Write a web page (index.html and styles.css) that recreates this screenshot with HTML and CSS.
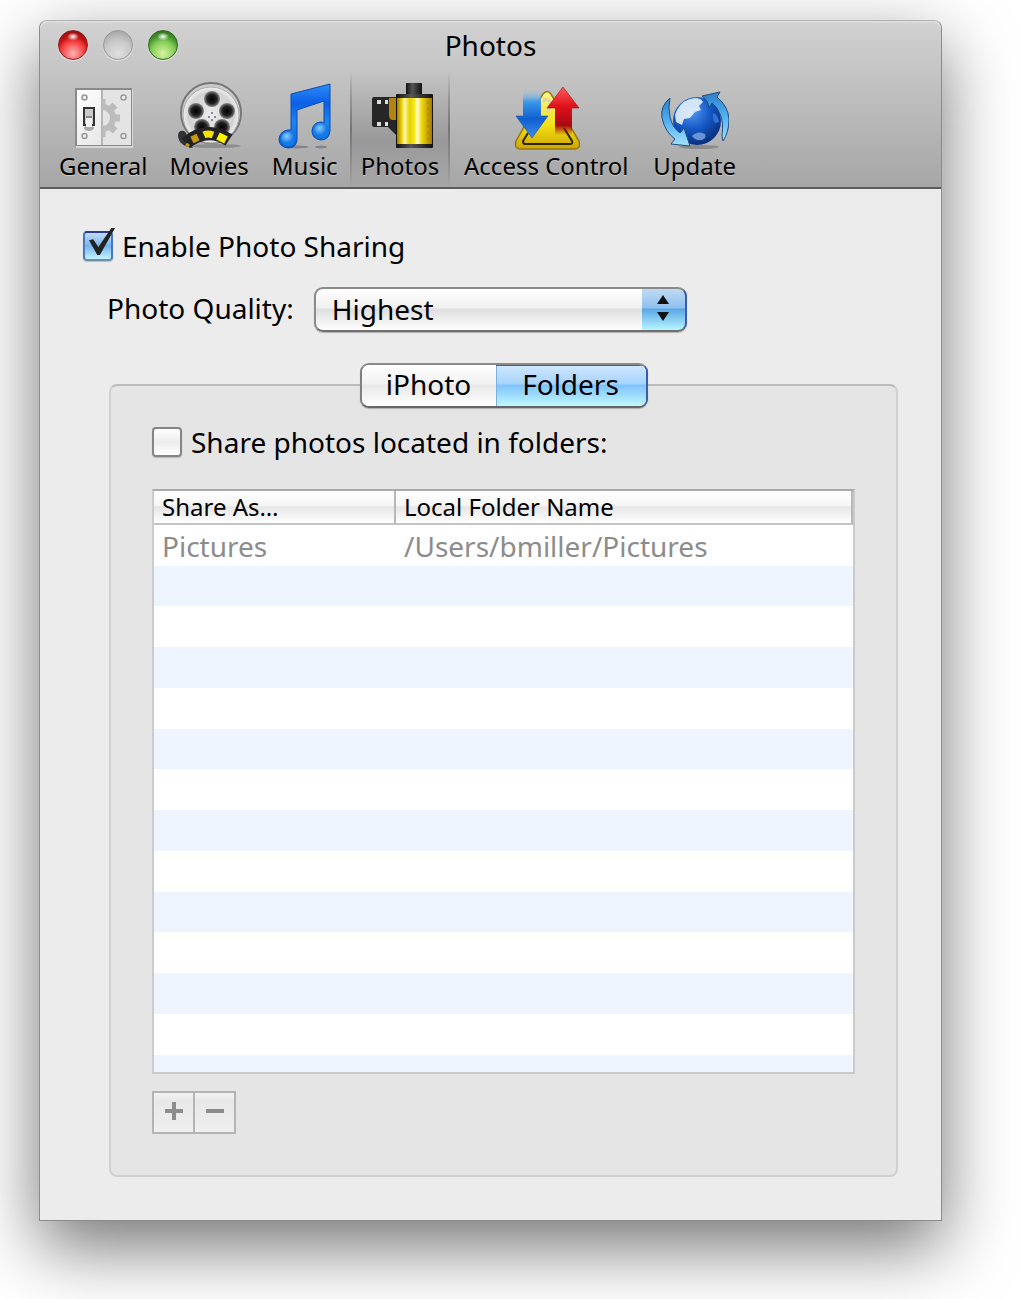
FILE: index.html
```html
<!DOCTYPE html>
<html lang="en">
<head>
    <meta charset="UTF-8">
    <meta name="viewport" content="width=device-width, initial-scale=1.0">
    <title>Photos</title>
    <link rel="stylesheet" href="styles.css">
</head>
<body>
    <main class="window">
        <header class="window-header">
            <div class="titlebar">
                <div class="lights">
                    <button type="button" class="light light-close" aria-label="Close"></button>
                    <button type="button" class="light light-minimize" aria-label="Minimize" disabled></button>
                    <button type="button" class="light light-zoom" aria-label="Zoom"></button>
                </div>
                <h1 class="title">Photos</h1>
            </div>

            <nav class="toolbar">
                <button type="button" class="tool">
                    <svg class="tool-icon" viewBox="0 0 68 68" aria-hidden="true">
                        <defs>
                            <linearGradient id="plate" x1="0" y1="0" x2="1" y2="1">
                                <stop offset="0" stop-color="#fff"/>
                                <stop offset="1" stop-color="#dedede"/>
                            </linearGradient>
                            <clipPath id="gear-half"><rect x="33" y="10" width="30" height="52"/></clipPath>
                        </defs>
                        <rect x="7" y="7" width="57" height="59" fill="#d8d8d8"/>
                        <rect x="6" y="6" width="57" height="58" fill="#8a8a8a"/>
                        <rect x="8" y="8" width="54" height="55" fill="url(#plate)"/>
                        <rect x="33" y="8" width="29" height="55" fill="#e4e4e4"/>
                        <path d="M33 8v55" stroke="#b5b5b5" stroke-width="2"/>
                        <g clip-path="url(#gear-half)" stroke="#bcbcbc" fill="none">
                            <circle cx="33" cy="36" r="11" stroke-width="6"/>
                            <path d="M33 17v6M33 49v6M46 36h5M42 27l4-4M42 45l4 4" stroke-width="7"/>
                        </g>
                        <g fill="#eee" stroke="#999" stroke-width="1.5">
                            <circle cx="15.5" cy="15.5" r="2.5"/>
                            <circle cx="54.5" cy="15.5" r="2.5"/>
                            <circle cx="15.5" cy="54" r="2.5"/>
                            <circle cx="54.5" cy="54" r="2.5"/>
                        </g>
                        <ellipse cx="20" cy="46" rx="5" ry="3" fill="#aaa"/>
                        <rect x="15" y="26" width="10" height="17" fill="#ccc" stroke="#333" stroke-width="2"/>
                        <rect x="17" y="36" width="6" height="9" fill="#f4f4f4"/>
                        <path d="M17 35h6" stroke="#888" stroke-width="2"/>
                    </svg>
                    <span>General</span>
                </button>
                <button type="button" class="tool">
                    <svg class="tool-icon" viewBox="0 0 68 68" aria-hidden="true">
                        <defs>
                            <radialGradient id="reel">
                                <stop offset="0" stop-color="#ededed"/>
                                <stop offset=".8" stop-color="#d2d2d2"/>
                                <stop offset="1" stop-color="#efefef"/>
                            </radialGradient>
                            <radialGradient id="hole">
                                <stop offset="0" stop-color="#000"/>
                                <stop offset=".6" stop-color="#222"/>
                                <stop offset="1" stop-color="#888"/>
                            </radialGradient>
                        </defs>
                        <ellipse cx="40" cy="64" rx="26" ry="2" fill="#777" opacity=".6"/>
                        <circle cx="36" cy="31" r="30" fill="#ccc" stroke="#777" stroke-width="2"/>
                        <circle cx="36" cy="33" r="28" fill="url(#reel)" stroke="#aaa"/>
                        <g fill="url(#hole)">
                            <circle cx="37" cy="17" r="8"/>
                            <circle cx="21" cy="29" r="8"/>
                            <circle cx="52" cy="29" r="8"/>
                            <circle cx="27" cy="45" r="8"/>
                            <circle cx="47" cy="45" r="8"/>
                        </g>
                        <g fill="#668">
                            <circle cx="37" cy="31" r="1"/>
                            <circle cx="34" cy="35" r="1"/>
                            <circle cx="40" cy="35" r="1"/>
                            <circle cx="37" cy="38" r="1"/>
                        </g>
                        <path d="M3 54q0-6 6-5q4 2 2 8l7 9q-14-2-15-12z" fill="#333"/>
                        <path d="M11 61Q32 44 54 58" fill="none" stroke="#222" stroke-width="13"/>
                        <path d="M17 58l6-3" fill="none" stroke="#c79a12" stroke-width="7"/>
                        <path d="M29 53q4-2 9 0" fill="none" stroke="#f2e400" stroke-width="7"/>
                        <path d="M43 54l8 4" fill="none" stroke="#fff200" stroke-width="8"/>
                        <path d="M11 62l3 2" stroke="#c79a12" stroke-width="3"/>
                    </svg>
                    <span>Movies</span>
                </button>
                <button type="button" class="tool">
                    <svg class="tool-icon" viewBox="0 0 68 68" aria-hidden="true">
                        <defs>
                            <linearGradient id="note" x1="0" y1="0" x2="0" y2="1">
                                <stop offset="0" stop-color="#2f8cf6"/>
                                <stop offset=".3" stop-color="#0b5fe8"/>
                                <stop offset=".6" stop-color="#1c86ee"/>
                                <stop offset="1" stop-color="#0b5cd0"/>
                            </linearGradient>
                            <radialGradient id="head" cx=".4" cy=".3">
                                <stop offset="0" stop-color="#8ccbff"/>
                                <stop offset="1" stop-color="#127ae6"/>
                            </radialGradient>
                        </defs>
                        <ellipse cx="26" cy="65" rx="12" ry="1.5" fill="#667" opacity=".6"/>
                        <ellipse cx="50" cy="65" rx="6" ry="1.5" fill="#667" opacity=".6"/>
                        <path d="M20 12L59 2v47q-1 9-9 9-9-1-9-9 1-9 9-9 2 0 3 1V19L26 28v30q-1 8-9 8-9-1-9-9 1-8 9-9h3z" fill="url(#note)" stroke="#0a4db4"/>
                        <circle cx="17" cy="57" r="7" fill="url(#head)"/>
                        <circle cx="50" cy="49" r="7" fill="url(#head)"/>
                    </svg>
                    <span>Music</span>
                </button>
                <button type="button" class="tool tool-active" aria-current="page">
                    <svg class="tool-icon" viewBox="0 0 68 68" aria-hidden="true">
                        <defs>
                            <linearGradient id="can">
                                <stop offset="0" stop-color="#a57b00"/>
                                <stop offset=".12" stop-color="#e8c800"/>
                                <stop offset=".22" stop-color="#fff9a0"/>
                                <stop offset=".36" stop-color="#e6cf00"/>
                                <stop offset=".5" stop-color="#f5ea20"/>
                                <stop offset=".58" stop-color="#fffde0"/>
                                <stop offset=".7" stop-color="#f0dc10"/>
                                <stop offset="1" stop-color="#a67800"/>
                            </linearGradient>
                            <linearGradient id="cap">
                                <stop offset="0" stop-color="#111"/>
                                <stop offset=".4" stop-color="#555"/>
                                <stop offset="1" stop-color="#111"/>
                            </linearGradient>
                        </defs>
                        <path d="M8 15h22v38l-8-8H8q-2 0-2-2V17q0-2 2-2z" fill="#262626"/>
                        <path d="M23 16h8v22h-5q-3-1-3-5z" fill="#b38410"/>
                        <g fill="#ddd">
                            <rect x="11" y="18" width="4" height="4"/>
                            <rect x="19" y="18" width="3" height="4"/>
                            <rect x="11" y="40" width="4" height="4"/>
                            <rect x="19" y="40" width="3" height="4"/>
                        </g>
                        <rect x="40" y="1" width="16" height="12" rx="1" fill="url(#cap)"/>
                        <rect x="30" y="12" width="37" height="54" rx="1" fill="url(#cap)"/>
                        <rect x="31" y="16" width="35" height="46" fill="url(#can)"/>
                        <path d="M62 19v40" stroke="#a87d00" stroke-width="1" stroke-dasharray="3 3"/>
                    </svg>
                    <span>Photos</span>
                </button>
                <button type="button" class="tool tool-wide">
                    <svg class="tool-icon" viewBox="0 0 68 68" aria-hidden="true">
                        <defs>
                            <linearGradient id="sign" x1="0" y1="0" x2="0" y2="1">
                                <stop offset="0" stop-color="#fff68a"/>
                                <stop offset=".6" stop-color="#f2df14"/>
                                <stop offset="1" stop-color="#cda400"/>
                            </linearGradient>
                            <linearGradient id="down" x1="0" y1="0" x2="0" y2="1">
                                <stop offset="0" stop-color="#8ec6f5" stop-opacity="0"/>
                                <stop offset=".25" stop-color="#3a97e8"/>
                                <stop offset=".6" stop-color="#0f5fd0"/>
                                <stop offset="1" stop-color="#3c8cec"/>
                            </linearGradient>
                            <linearGradient id="up" x1="0" y1="0" x2="0" y2="1">
                                <stop offset="0" stop-color="#ff5a5a"/>
                                <stop offset=".4" stop-color="#e0121c"/>
                                <stop offset=".8" stop-color="#a80812"/>
                                <stop offset="1" stop-color="#900" stop-opacity="0"/>
                            </linearGradient>
                        </defs>
                        <path d="M31 12q4-5 8 0l28 47q2 8-4 8H8q-6 0-4-8z" fill="url(#sign)" stroke="#96780a" stroke-width="1.5"/>
                        <path d="M16 51l-5 8q0 3 2 3h45q3 0 2-3l-8-13" fill="none" stroke="#2c2600" stroke-width="2"/>
                        <path d="M31 20q3-5 7 0v6l-4 4" fill="none" stroke="#ddd6a0" stroke-width="3"/>
                        <path d="M11 8h18v26h7L20 56 4 34h7z" fill="url(#down)"/>
                        <path d="M11 34H4l16 22 16-22h-7" fill="none" stroke="#1c55a8" stroke-opacity=".6"/>
                        <path d="M51 5l16 21h-7v27H43V26h-8z" fill="url(#up)"/>
                        <path d="M43 26h-8L51 5l16 21h-7" fill="none" stroke="#9c0d14" stroke-opacity=".6"/>
                    </svg>
                    <span>Access Control</span>
                </button>
                <button type="button" class="tool">
                    <svg class="tool-icon" viewBox="0 0 68 68" aria-hidden="true">
                        <defs>
                            <radialGradient id="globe" cx=".4" cy=".3" r=".75">
                                <stop offset="0" stop-color="#4f9af0"/>
                                <stop offset=".5" stop-color="#1458c4"/>
                                <stop offset="1" stop-color="#062a74"/>
                            </radialGradient>
                            <linearGradient id="swoosh" x1="0" y1="0" x2="0" y2="1">
                                <stop offset="0" stop-color="#2a7fc9"/>
                                <stop offset=".5" stop-color="#55b0f2"/>
                                <stop offset="1" stop-color="#a5e2ff"/>
                            </linearGradient>
                        </defs>
                        <ellipse cx="38" cy="65" rx="20" ry="2" fill="#666" opacity=".5"/>
                        <circle cx="36" cy="39" r="24" fill="url(#globe)"/>
                        <path d="M16 28q6-11 18-12 6 0 8 4l-4 4 2 4-6 2-5 6-6 1-2 6-6-3-1-7z" fill="#e6f1fb" opacity=".9"/>
                        <path d="M31 54q6-6 13-2 2 4-3 6-7 1-10-4z" fill="#8fb6ea" opacity=".7"/>
                        <path d="M52 31q5 2 6 9l-4 1q-3-5-2-10z" fill="#2f74d4"/>
                        <path d="M9 16Q-1 24 1 36 4 50 14 57l-4 5 19 2-6-18-4 5Q11 45 9 35 7 25 9 16z" fill="url(#swoosh)" stroke="#1b4d7c"/>
                        <path d="M41 14l18-4-3 5q11 9 12 22 0 13-6 22-1-3-1-6 2-13-2-21-3-8-8-11l-3 5q-1-8-7-12z" fill="url(#swoosh)" stroke="#1b4d7c"/>
                    </svg>
                    <span>Update</span>
                </button>
            </nav>
        </header>

        <form class="content">
            <div class="check-row">
                <input type="checkbox" class="check" id="enable-sharing" checked>
                <label for="enable-sharing">Enable Photo Sharing</label>
            </div>

            <div class="quality-row">
                <label class="quality-label" for="quality">Photo Quality:</label>
                <div class="popup">
                    <select class="popup-select" id="quality">
                        <option>Highest</option>
                        <option>Medium</option>
                        <option>Lowest</option>
                    </select>
                    <svg class="popup-arrows" viewBox="0 0 12 28" aria-hidden="true">
                        <path d="M6 1l6 9H0zM6 27l6-9H0z" fill="#111"/>
                    </svg>
                </div>
            </div>

            <section class="group">
                <div class="tabs" role="tablist">
                    <button type="button" class="tab" role="tab" aria-selected="false">iPhoto</button>
                    <button type="button" class="tab tab-active" role="tab" aria-selected="true">Folders</button>
                </div>

                <div class="check-row">
                    <input type="checkbox" class="check" id="share-folders">
                    <label for="share-folders">Share photos located in folders:</label>
                </div>

                <div class="folder-list">
                    <table class="folders">
                        <thead>
                            <tr>
                                <th class="col-share" scope="col">Share As…</th>
                                <th scope="col">Local Folder Name</th>
                            </tr>
                        </thead>
                        <tbody>
                            <tr>
                                <td>Pictures</td>
                                <td>/Users/bmiller/Pictures</td>
                            </tr>
                        </tbody>
                    </table>
                </div>

                <div class="list-buttons">
                    <button type="button" class="list-button" aria-label="Add folder">
                        <svg viewBox="0 0 18 18" aria-hidden="true"><path d="M0 9h18M9 0v18" stroke="#8c8c8c" stroke-width="4"/></svg>
                    </button>
                    <button type="button" class="list-button" aria-label="Remove folder">
                        <svg viewBox="0 0 18 18" aria-hidden="true"><path d="M0 9h18" stroke="#8c8c8c" stroke-width="4"/></svg>
                    </button>
                </div>
            </section>
        </form>
    </main>
</body>
</html>
```
FILE: styles.css
```css
* {
    box-sizing: border-box;
}

body {
    margin: 0;
    padding: 20px 78px 78px 39px;
    background-color: #fff;
    color: #000;
    font-family: "Noto Sans", "Open Sans", sans-serif;
    font-size: 28px;
    line-height: 36px;
}

button, select {
    font: inherit;
    color: inherit;
    margin: 0;
}

.window {
    border: 1px solid #8c8c8c;
    border-top-color: #b4b4b4;
    border-radius: 8px 8px 0 0;
    background-color: #ececec;
    box-shadow: 0 26px 70px rgba(0, 0, 0, 0.55);
}

/* Title bar and toolbar */
.window-header {
    border-bottom: 2px solid #5c5c5c;
    border-radius: 8px 8px 0 0;
    background: linear-gradient(#d2d2d2, #a6a6a6);
    box-shadow: inset 0 2px 0 #dcdcdc;
}

.titlebar {
    display: grid;
    grid-template-columns: 1fr auto 1fr;
    align-items: center;
    height: 50px;
    padding: 0 18px 2px;
}

.lights {
    display: flex;
    gap: 15px;
}

.light {
    width: 30px;
    height: 30px;
    padding: 0;
    border: 1px solid #777;
    border-radius: 50%;
    box-shadow: 0 1px 1px rgba(255, 255, 255, 0.6);
}

.light-close {
    border-color: #8a2020;
    background:
        radial-gradient(ellipse 6px 4px at 50% 20%, #fff, transparent),
        radial-gradient(circle at 50% 80%, #ffb4b4 0, #f54040 45%, #c01010 65%, #701010 100%);
}

.light-minimize {
    border-color: #999;
    background: radial-gradient(circle at 50% 80%, #e0e0e0 0, #c8c8c8 50%, #999 100%);
}

.light-zoom {
    border-color: #2f6a1c;
    background:
        radial-gradient(ellipse 6px 4px at 50% 20%, #fff, transparent),
        radial-gradient(circle at 50% 80%, #d8f4a0 0, #86cc58 45%, #479a30 65%, #205010 100%);
}

.title {
    margin: 0;
    font-size: 28px;
    font-weight: normal;
}

.toolbar {
    display: flex;
    padding: 0 8px;
}

.tool {
    display: flex;
    flex-direction: column;
    align-items: center;
    min-width: 90px;
    padding: 11px 11px 5px;
    border: 0;
    background: none;
    font-size: 24px;
    line-height: 32px;
    text-shadow: 0 1px 0 rgba(255, 255, 255, 0.4);
    white-space: nowrap;
}

.tool-wide {
    min-width: 192px;
}

.tool-icon {
    width: 68px;
    height: 68px;
}

.tool-active {
    background:
        linear-gradient(transparent, #777 50%, transparent) left / 2px 100% no-repeat,
        linear-gradient(transparent, #777 50%, transparent) right / 2px 100% no-repeat,
        linear-gradient(transparent, rgba(0, 0, 0, 0.14) 60%, transparent);
}

/* Settings */
.content {
    padding: 39px 43px 43px;
}

.check-row {
    display: flex;
    align-items: center;
    gap: 9px;
}

.check {
    appearance: none;
    width: 30px;
    height: 30px;
    margin: 0;
    border: 2px solid #858585;
    border-radius: 4px;
    background: linear-gradient(#fff, #ececec 50%, #fff);
    box-shadow: 0 1px 1px rgba(0, 0, 0, 0.2);
}

.check:checked {
    position: relative;
    border-color: #2c3a9c #4a78b8 #6c8ca8;
    background: linear-gradient(#c2dcf6, #74b4ee 50%, #c4f4ff);
}

/* Tick reaches past the top right corner of the box */
.check:checked::after {
    content: "";
    position: absolute;
    top: -5px;
    left: 4px;
    width: 26px;
    height: 27px;
    background-color: #222;
    clip-path: polygon(0 45%, 16% 42%, 36% 70%, 86% 0, 100% 0, 42% 100%, 32% 100%);
}

.quality-row {
    display: flex;
    align-items: center;
    gap: 20px;
    margin: 23px 0 52px 24px;
}

.quality-label {
    padding-bottom: 4px;
}

.popup {
    position: relative;
    width: 373px;
}

.popup-select {
    appearance: none;
    display: block;
    width: 100%;
    height: 45px;
    padding: 0 56px 2px 16px;
    border: 2px solid #808080;
    border-color: #8a8a8a #3c5ca8 #707070 #8a8a8a;
    border-radius: 9px;
    background:
        linear-gradient(#c0daf4, #8fc2ee 45%, #5ca8e6 50%, #b8f6ff) right / 43px 100% no-repeat,
        linear-gradient(#fff, #f0f0f0 45%, #dfdfdf 50%, #fff);
    box-shadow: 0 1px 1px rgba(0, 0, 0, 0.25);
}

.popup-arrows {
    position: absolute;
    top: 7px;
    right: 18px;
    width: 12px;
    height: 28px;
    pointer-events: none;
}

/* Group box with the tabs sitting on its top edge */
.group {
    margin-left: 26px;
    padding: 0 41px 41px;
    border: 2px solid #d0d0d0;
    border-top-color: #bcbcbc;
    border-radius: 8px;
    background-color: #e5e5e5;
}

.tabs {
    display: grid;
    grid-template-columns: 134px 1fr;
    width: 288px;
    margin: -23px auto 16px;
    border: 2px solid #808080;
    border-color: #8a8a8a #3c5ca8 #666 #808080;
    border-radius: 9px;
    background-color: #fff;
    box-shadow: 0 1px 1px rgba(0, 0, 0, 0.25);
    overflow: hidden;
}

.tab {
    height: 41px;
    padding: 0 0 3px;
    border: 0;
    background: linear-gradient(#fff, #f2f2f2 45%, #e8e8e8 50%, #fff);
}

.tab-active {
    background: linear-gradient(#d0e8ff, #a8d4fc 45%, #80c4fc 50%, #c0f8ff);
    box-shadow: inset 0 1px 0 #4858b0, inset 1px 0 0 #78b0e0;
}

.folder-list {
    height: 585px;
    margin-top: 29px;
    border: 2px solid #cbcbcb;
    border-top-color: #aaa;
    background: repeating-linear-gradient(#fff 0 41px, #eef5fe 41px 81px, #fff 81px 122px, #eef5fe 122px 163px) 0 34px;
}

.folders {
    width: 100%;
    border-collapse: separate;
    border-spacing: 0;
    table-layout: fixed;
}

.folders th {
    height: 34px;
    padding: 0 8px;
    border-right: 2px solid #b8b8b8;
    border-bottom: 2px solid #c4c4c4;
    background: linear-gradient(#fff, #f6f6f6 45%, #e6e6e6 50%, #fff);
    font-size: 24px;
    font-weight: normal;
    line-height: 32px;
    text-align: left;
}

.folders td {
    height: 41px;
    padding: 0 8px;
    color: #8c8c8c;
}

.folders .col-share {
    width: 242px;
}

.list-buttons {
    display: flex;
    margin-top: 17px;
}

.list-button {
    display: flex;
    align-items: center;
    justify-content: center;
    width: 43px;
    height: 43px;
    padding: 0 0 4px;
    border: 2px solid #b4b4b4;
    background: linear-gradient(#f2f2f2, #e8e8e8 20%, #efefef);
}

.list-button + .list-button {
    margin-left: -2px;
}

.list-button svg {
    width: 18px;
    height: 18px;
}
```
